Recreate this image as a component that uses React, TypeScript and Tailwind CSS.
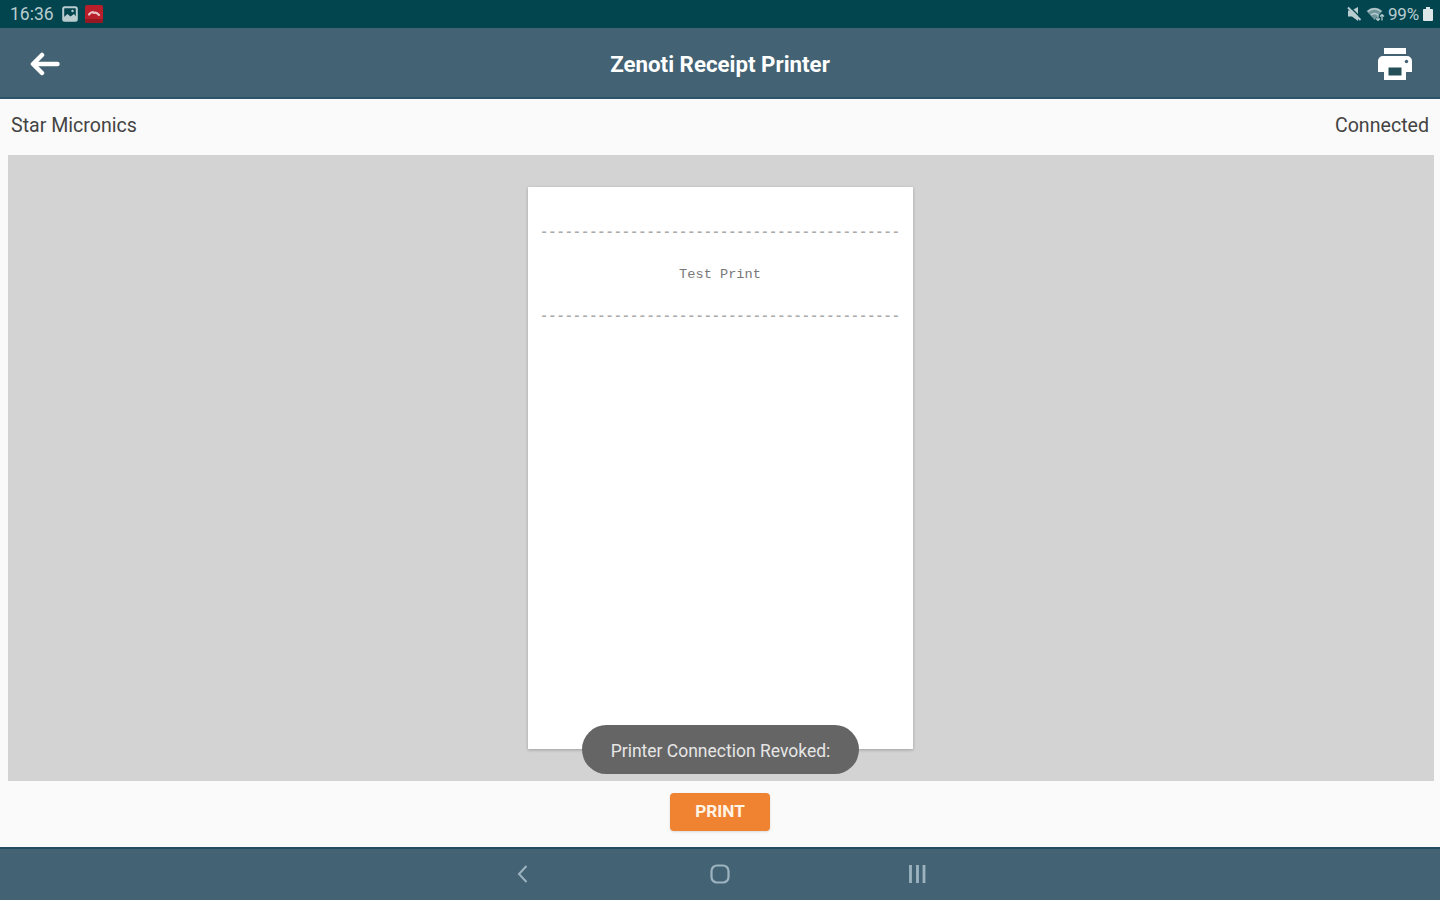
const DASHES = "-".repeat(44);

function StatusBar() {
  return (
    <div className="flex h-7 shrink-0 items-center justify-between bg-[#03454f] pl-[10px] pr-[7px] text-[#b9cdd0]">
      <div className="flex items-center">
        <span className="w-[52px] text-[17.5px] leading-7">16:36</span>
        <svg className="h-4 w-4" viewBox="0 0 16 16" fill="none">
          <rect x="1.2" y="1.2" width="13.6" height="13.6" rx="1.5" stroke="currentColor" strokeWidth="2" />
          <path d="M2 11l3.5-3 3 2.5L12 8l2.5 3v3.5H2z" fill="currentColor" />
          <circle cx="10.5" cy="5" r="1.2" fill="currentColor" />
        </svg>
        <svg className="ml-[7px] h-[18px] w-[18px]" viewBox="0 0 18 18" fill="none">
          <rect width="18" height="18" rx="2" fill="#b81f2b" />
          <path d="M0 14h18v2a2 2 0 0 1-2 2H2a2 2 0 0 1-2-2z" fill="#941923" />
          <path d="M4 9.500c2.500-3 4-2.500 5-1.500 1.500-.8 3-.5 5 2" stroke="#e9c4c6" strokeWidth="2.2" strokeLinecap="round" strokeLinejoin="round" />
        </svg>
      </div>
      <div className="flex items-center">
        <svg className="h-4 w-4" viewBox="0 0 16 16" fill="none">
          <path d="M1 4.500h3.500L11 1v14L5 10.500H1z" fill="currentColor" />
          <path d="M4 2L15 13" stroke="#03454f" strokeWidth="1.500" />
          <path d="M1 1.500L13.500 14" stroke="currentColor" strokeWidth="2" />
        </svg>
        <svg className="ml-[3px] h-4 w-[19px]" viewBox="0 0 19 16" fill="none">
          <path d="M.5 5C5 .5 12 .5 16.500 5L8.500 14z" fill="currentColor" opacity=".6" />
          <path d="M2 5.500c4-3.500 9-3.500 13 0M5 9c2-2 5-2 7 0" stroke="currentColor" strokeWidth="1.500" />
          <path d="M12 8.500v6m-2-2l2 2 2-2m2 2v-6m-2 2l2-2 2 2" stroke="currentColor" strokeWidth="1.200" />
        </svg>
        <span className="ml-[3px] w-[35px] whitespace-nowrap text-[17px] leading-7 tracking-[-0.2px]">99%</span>
        <svg className="h-[14px] w-[10px]" viewBox="0 0 10 14">
          <path d="M3 0h4v2h2a1 1 0 0 1 1 1v10a1 1 0 0 1-1 1H1a1 1 0 0 1-1-1V3a1 1 0 0 1 1-1h2z" fill="#dce8e8" />
        </svg>
      </div>
    </div>
  );
}

function Header() {
  return (
    <header className="flex h-[71px] shrink-0 items-center justify-between border-b-2 border-[#2b536a] bg-[#436273] pl-[30px] pr-[27px] pt-[3px] text-white">
      <button aria-label="Back">
        <svg className="h-6 w-[30px]" viewBox="0 0 30 24" fill="none">
          <path d="M12 3L3 12l9 9M3.500 12h24" stroke="white" strokeWidth="4.500" strokeLinecap="round" strokeLinejoin="round" />
        </svg>
      </button>
      <h1 className="pl-[3px] text-[22.3px] font-bold leading-7">Zenoti Receipt Printer</h1>
      <button aria-label="Printer">
        <svg className="h-8 w-9" viewBox="0 0 36 32">
          <path d="M7 0h22v6H7z" fill="white" />
          <path d="M6 8h24a5 5 0 0 1 5 5v11h-6v8H7v-8H1V13a5 5 0 0 1 5-5z" fill="white" />
          <path d="M11.500 19.500h13v8h-13z" fill="#244e58" />
          <circle cx="29.500" cy="13.500" r="1.700" fill="#436273" />
        </svg>
      </button>
    </header>
  );
}

function Receipt() {
  return (
    <div className="flex h-[562px] w-[385px] flex-col items-center bg-white font-['Liberation_Mono','Courier_New',monospace] text-[13.630px] text-[#777] shadow-[0_1px_3px_rgba(0,0,0,0.25)]">
      <p className="mt-9 whitespace-nowrap font-bold leading-5 text-[#aaa]">{DASHES}</p>
      <p className="mt-[22px] whitespace-nowrap leading-5">Test Print</p>
      <p className="mt-[22px] whitespace-nowrap font-bold leading-5 text-[#aaa]">{DASHES}</p>
    </div>
  );
}

function NavBar() {
  return (
    <nav className="flex h-[53px] shrink-0 items-center justify-center border-t-2 border-[#234a60] bg-[#436273] pb-[2px] text-[#9db4c0]">
      <svg className="h-5 w-5" viewBox="0 0 20 20" fill="none">
        <path d="M14.500 2L7 10l7.500 8" stroke="currentColor" strokeWidth="2" />
      </svg>
      <svg className="mx-[178px] h-5 w-5" viewBox="0 0 20 20" fill="none">
        <rect x="1.500" y="1.500" width="17" height="17" rx="5.500" stroke="currentColor" strokeWidth="2.200" />
      </svg>
      <svg className="h-5 w-5" viewBox="0 0 20 20" fill="none">
        <path d="M2.500 1v18M9.500 1v18M16 1v18" stroke="currentColor" strokeWidth="2.800" />
      </svg>
    </nav>
  );
}

export default function App() {
  return (
    <div className="flex h-[900px] w-[1440px] flex-col overflow-hidden bg-[#fafafa] font-[Roboto,sans-serif]">
      <StatusBar />
      <Header />
      <div className="flex h-[56px] shrink-0 items-center justify-between px-[11px] pb-[3px] text-[19.600px] text-[#444]">
        <span>Star Micronics</span>
        <span>Connected</span>
      </div>
      <main className="relative ml-2 mr-[6px] flex h-[626px] shrink-0 justify-center bg-[#d3d3d3] pr-[2px] pt-8">
        <Receipt />
        {/* toast */}
        <div className="absolute bottom-[7px] left-[574px] flex h-[49px] w-[277px] items-center justify-center whitespace-nowrap rounded-full bg-[#656565] pt-[3px] text-[17.500px] text-[#e6e6e6]">
          Printer Connection Revoked:
        </div>
      </main>
      <div className="flex flex-1 items-start justify-center pt-3">
        <button className="h-[38px] w-[100px] rounded-[4px] bg-[#f08331] text-[17.200px] font-bold text-[#fff3e6] shadow-sm">
          PRINT
        </button>
      </div>
      <NavBar />
    </div>
  );
}
